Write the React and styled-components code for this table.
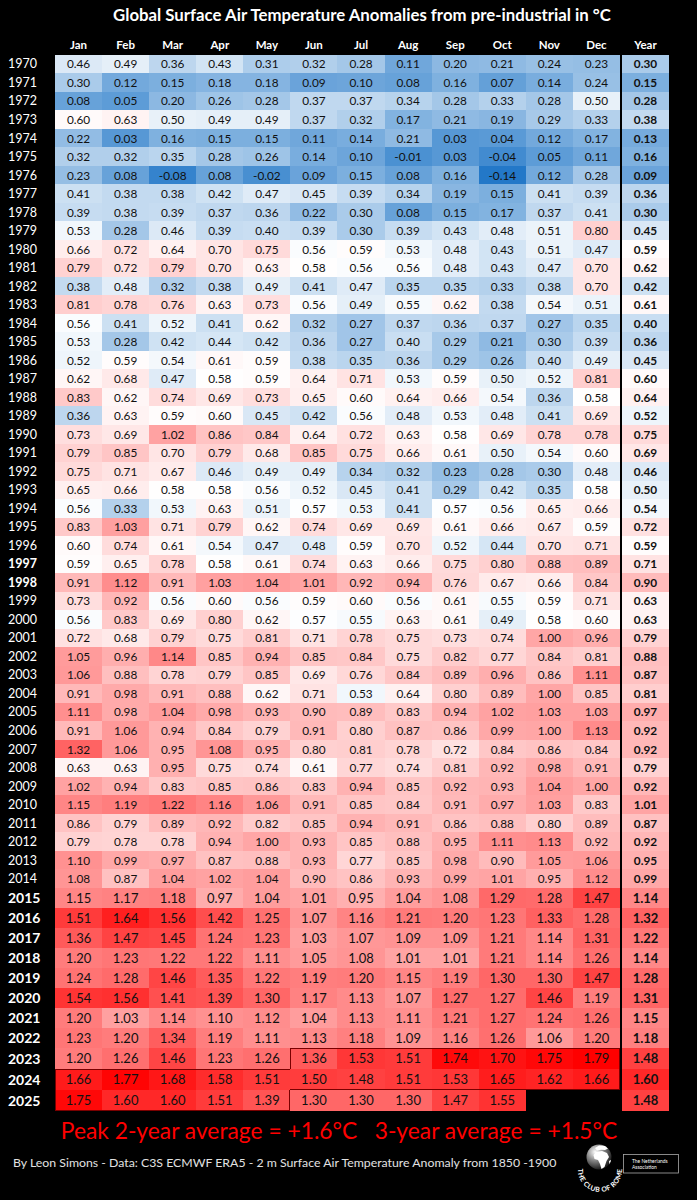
import React from 'react';
import styled, { createGlobalStyle } from 'styled-components';

const GlobalStyle = createGlobalStyle`
  html, body {
    margin: 0;
    padding: 0;
    background: #000;
  }
  body {
    font-family: Lato, 'Open Sans', 'Liberation Sans', sans-serif;
  }
`;

const MONTHS = ['Jan', 'Feb', 'Mar', 'Apr', 'May', 'Jun', 'Jul', 'Aug', 'Sep', 'Oct', 'Nov', 'Dec'];

// year, 12 months | yearly mean  ("-" = no data yet)
const RAW = `
1970 0.46 0.49 0.36 0.43 0.31 0.32 0.28 0.11 0.20 0.21 0.24 0.23 | 0.30
1971 0.30 0.12 0.15 0.18 0.18 0.09 0.10 0.08 0.16 0.07 0.14 0.24 | 0.15
1972 0.08 0.05 0.20 0.26 0.28 0.37 0.37 0.34 0.28 0.33 0.28 0.50 | 0.28
1973 0.60 0.63 0.50 0.49 0.49 0.37 0.32 0.17 0.21 0.19 0.29 0.33 | 0.38
1974 0.22 0.03 0.16 0.15 0.15 0.11 0.14 0.21 0.03 0.04 0.12 0.17 | 0.13
1975 0.32 0.32 0.35 0.28 0.26 0.14 0.10 -0.01 0.03 -0.04 0.05 0.11 | 0.16
1976 0.23 0.08 -0.08 0.08 -0.02 0.09 0.15 0.08 0.16 -0.14 0.12 0.28 | 0.09
1977 0.41 0.38 0.38 0.42 0.47 0.45 0.39 0.34 0.19 0.15 0.41 0.39 | 0.36
1978 0.39 0.38 0.39 0.37 0.36 0.22 0.30 0.08 0.15 0.17 0.37 0.41 | 0.30
1979 0.53 0.28 0.46 0.39 0.40 0.39 0.30 0.39 0.43 0.48 0.51 0.80 | 0.45
1980 0.66 0.72 0.64 0.70 0.75 0.56 0.59 0.53 0.48 0.43 0.51 0.47 | 0.59
1981 0.79 0.72 0.79 0.70 0.63 0.58 0.56 0.56 0.48 0.43 0.47 0.70 | 0.62
1982 0.38 0.48 0.32 0.38 0.49 0.41 0.47 0.35 0.35 0.33 0.38 0.70 | 0.42
1983 0.81 0.78 0.76 0.63 0.73 0.56 0.49 0.55 0.62 0.38 0.54 0.51 | 0.61
1984 0.56 0.41 0.52 0.41 0.62 0.32 0.27 0.37 0.36 0.37 0.27 0.35 | 0.40
1985 0.53 0.28 0.42 0.44 0.42 0.36 0.27 0.40 0.29 0.21 0.30 0.39 | 0.36
1986 0.52 0.59 0.54 0.61 0.59 0.38 0.35 0.36 0.29 0.26 0.40 0.49 | 0.45
1987 0.62 0.68 0.47 0.58 0.59 0.64 0.71 0.53 0.59 0.50 0.52 0.81 | 0.60
1988 0.83 0.62 0.74 0.69 0.73 0.65 0.60 0.64 0.66 0.54 0.36 0.58 | 0.64
1989 0.36 0.63 0.59 0.60 0.45 0.42 0.56 0.48 0.53 0.48 0.41 0.69 | 0.52
1990 0.73 0.69 1.02 0.86 0.84 0.64 0.72 0.63 0.58 0.69 0.78 0.78 | 0.75
1991 0.79 0.85 0.70 0.79 0.68 0.85 0.75 0.66 0.61 0.50 0.54 0.60 | 0.69
1992 0.75 0.71 0.67 0.46 0.49 0.49 0.34 0.32 0.23 0.28 0.30 0.48 | 0.46
1993 0.65 0.66 0.58 0.58 0.56 0.52 0.45 0.41 0.29 0.42 0.35 0.58 | 0.50
1994 0.56 0.33 0.53 0.63 0.51 0.57 0.53 0.41 0.57 0.56 0.65 0.66 | 0.54
1995 0.83 1.03 0.71 0.79 0.62 0.74 0.69 0.69 0.61 0.66 0.67 0.59 | 0.72
1996 0.60 0.74 0.61 0.54 0.47 0.48 0.59 0.70 0.52 0.44 0.70 0.71 | 0.59
1997 0.59 0.65 0.78 0.58 0.61 0.74 0.63 0.66 0.75 0.80 0.88 0.89 | 0.71
1998 0.91 1.12 0.91 1.03 1.04 1.01 0.92 0.94 0.76 0.67 0.66 0.84 | 0.90
1999 0.73 0.92 0.56 0.60 0.56 0.59 0.60 0.56 0.61 0.55 0.59 0.71 | 0.63
2000 0.56 0.83 0.69 0.80 0.62 0.57 0.55 0.63 0.61 0.49 0.58 0.60 | 0.63
2001 0.72 0.68 0.79 0.75 0.81 0.71 0.78 0.75 0.73 0.74 1.00 0.96 | 0.79
2002 1.05 0.96 1.14 0.85 0.94 0.85 0.84 0.75 0.82 0.77 0.84 0.81 | 0.88
2003 1.06 0.88 0.78 0.79 0.85 0.69 0.76 0.84 0.89 0.96 0.86 1.11 | 0.87
2004 0.91 0.98 0.91 0.88 0.62 0.71 0.53 0.64 0.80 0.89 1.00 0.85 | 0.81
2005 1.11 0.98 1.04 0.98 0.93 0.90 0.89 0.83 0.94 1.02 1.03 1.03 | 0.97
2006 0.91 1.06 0.94 0.84 0.79 0.91 0.80 0.87 0.86 0.99 1.00 1.13 | 0.92
2007 1.32 1.06 0.95 1.08 0.95 0.80 0.81 0.78 0.72 0.84 0.86 0.84 | 0.92
2008 0.63 0.63 0.95 0.75 0.74 0.61 0.77 0.74 0.81 0.92 0.98 0.91 | 0.79
2009 1.02 0.94 0.83 0.85 0.86 0.83 0.94 0.85 0.92 0.93 1.04 1.00 | 0.92
2010 1.15 1.19 1.22 1.16 1.06 0.91 0.85 0.84 0.91 0.97 1.03 0.83 | 1.01
2011 0.86 0.79 0.89 0.92 0.82 0.85 0.94 0.91 0.86 0.88 0.80 0.89 | 0.87
2012 0.79 0.78 0.78 0.94 1.00 0.93 0.85 0.88 0.95 1.11 1.13 0.92 | 0.92
2013 1.10 0.99 0.97 0.87 0.88 0.93 0.77 0.85 0.98 0.90 1.05 1.06 | 0.95
2014 1.08 0.87 1.04 1.02 1.04 0.90 0.86 0.93 0.99 1.01 0.95 1.12 | 0.99
2015 1.15 1.17 1.18 0.97 1.04 1.01 0.95 1.04 1.08 1.29 1.28 1.47 | 1.14
2016 1.51 1.64 1.56 1.42 1.25 1.07 1.16 1.21 1.20 1.23 1.33 1.28 | 1.32
2017 1.36 1.47 1.45 1.24 1.23 1.03 1.07 1.09 1.09 1.21 1.14 1.31 | 1.22
2018 1.20 1.23 1.22 1.22 1.11 1.05 1.08 1.01 1.01 1.21 1.14 1.26 | 1.14
2019 1.24 1.28 1.46 1.35 1.22 1.19 1.20 1.15 1.19 1.30 1.30 1.47 | 1.28
2020 1.54 1.56 1.41 1.39 1.30 1.17 1.13 1.07 1.27 1.27 1.46 1.19 | 1.31
2021 1.20 1.03 1.14 1.10 1.12 1.04 1.13 1.11 1.21 1.27 1.24 1.26 | 1.15
2022 1.23 1.20 1.34 1.19 1.11 1.13 1.18 1.09 1.16 1.26 1.06 1.20 | 1.18
2023 1.20 1.26 1.46 1.23 1.26 1.36 1.53 1.51 1.74 1.70 1.75 1.79 | 1.48
2024 1.66 1.77 1.68 1.58 1.51 1.50 1.48 1.51 1.53 1.65 1.62 1.66 | 1.60
2025 1.75 1.60 1.60 1.51 1.39 1.30 1.30 1.30 1.47 1.55 - - | 1.48
`;

const ROWS = RAW.trim().split('\n').map((line) => {
  const [left, mean] = line.split('|');
  const parts = left.trim().split(/\s+/);
  return {
    year: Number(parts[0]),
    months: parts.slice(1).map((v) => (v === '-' ? null : v)),
    mean: mean.trim(),
  };
});

// excel-like 3 colour scale: blue -> white -> red
const MIN = -0.14;
const MID = 0.575;
const MAX = 1.79;
const COLD = [35, 120, 200];
const HOT = [255, 0, 0];

function heat(value) {
  const n = parseFloat(value);
  const cold = n < MID;
  const t = cold ? Math.min(1, (MID - n) / (MID - MIN)) : Math.min(1, (n - MID) / (MAX - MID));
  const c = cold ? COLD : HOT;
  const mix = (i) => Math.round(255 + (c[i] - 255) * t);
  return `rgb(${mix(0)}, ${mix(1)}, ${mix(2)})`;
}

// peak 24 months: Jun 2023 - May 2025
const monthIndex = (year, m) => year * 12 + m;
const PEAK_FROM = monthIndex(2023, 5);
const PEAK_TO = monthIndex(2025, 4);
const inPeak = (year, m) => {
  const i = monthIndex(year, m);
  return i >= PEAK_FROM && i <= PEAK_TO;
};
function peakEdges(year, m) {
  if (!inPeak(year, m)) return '';
  let e = '';
  if (!inPeak(year - 1, m)) e += 't';
  if (!inPeak(year + 1, m)) e += 'b';
  if (m === 0 || !inPeak(year, m - 1)) e += 'l';
  if (m === 11 || !inPeak(year, m + 1)) e += 'r';
  return e;
}

function rowHeight(year) {
  if (year >= 2023) return 21;
  if (year >= 2015) return 20;
  return 18.52;
}

const GRID = `55px repeat(12, 1fr) 2px 47px`;

const Page = styled.div`
  width: 697px;
  height: 1200px;
  background: #000;
  color: #fff;
  overflow: hidden;
`;

const Title = styled.h1`
  margin: 0;
  width: 669px;
  height: 35px;
  box-sizing: border-box;
  padding-left: 55px;
  text-align: center;
  line-height: 30px;
  font-size: 16.8px;
  font-weight: 700;
  color: #fff;
  white-space: nowrap;
`;

const Table = styled.div`
  width: 669px;
`;

const HeaderRow = styled.div`
  display: grid;
  grid-template-columns: ${GRID};
  height: 19.7px;
  align-items: center;
`;

const HeaderLabel = styled.div`
  grid-column: ${(p) => p.$col};
  text-align: center;
  font-size: 11.5px;
  font-weight: 700;
  color: #fff;
`;

const Row = styled.div`
  display: grid;
  grid-template-columns: ${GRID};
  height: ${(p) => p.$h}px;
`;

const YearLabel = styled.div`
  display: flex;
  align-items: center;
  padding-left: 8px;
  color: #fff;
  font-size: ${(p) => (p.$big ? 14 : 12.5)}px;
  font-weight: ${(p) => (p.$bold ? 700 : 400)};
`;

const edgeShadow = (edges) => {
  const s = [];
  const c = '#7a0000';
  if (edges.includes('t')) s.push(`inset 0 1px 0 ${c}`);
  if (edges.includes('b')) s.push(`inset 0 -1px 0 ${c}`);
  if (edges.includes('l')) s.push(`inset 1px 0 0 ${c}`);
  if (edges.includes('r')) s.push(`inset -1px 0 0 ${c}`);
  return s.length ? s.join(', ') : 'none';
};

const Cell = styled.div`
  display: flex;
  align-items: center;
  justify-content: center;
  background: ${(p) => p.$bg};
  box-shadow: ${(p) => edgeShadow(p.$edges || '')};
  color: #111;
  font-size: ${(p) => (p.$big ? 13 : 11.8)}px;
  font-weight: ${(p) => (p.$bold ? 700 : 400)};
`;

const EmptyCell = styled.div`
  background: #000;
`;

const Gap = styled.div`
  background: #000;
`;

const Headline = styled.div`
  width: 678px;
  height: 38px;
  line-height: 38px;
  text-align: center;
  color: #ff0000;
  font-size: 22.8px;
  white-space: pre;
`;

const CreditRow = styled.div`
  display: flex;
  align-items: flex-start;
  height: 51px;
`;

const Credits = styled.div`
  padding: 7px 0 0 13px;
  line-height: 14px;
  font-size: 12.3px;
  color: #e2e2e2;
  white-space: nowrap;
`;

const LogoWrap = styled.div`
  margin: -9px 12px 0 auto;
  width: 115px;
  height: 58px;
  flex-shrink: 0;
`;

function ClubOfRomeLogo() {
  return (
    <LogoWrap>
      <svg width="115" height="58" viewBox="0 0 115 58">
        <defs>
          <radialGradient id="globeShade" cx="35%" cy="30%" r="75%">
            <stop offset="0" stopColor="#ffffff" />
            <stop offset="0.45" stopColor="#8a8a8a" />
            <stop offset="1" stopColor="#111" />
          </radialGradient>
          <clipPath id="globeClip">
            <circle cx="29" cy="17" r="12.5" />
          </clipPath>
          <path id="clubArc" d="M 9.3 22.5 A 22 22 0 1 0 50.7 22.5" />
        </defs>
        <circle cx="29" cy="17" r="12.5" fill="url(#globeShade)" />
        <g clipPath="url(#globeClip)" fill="#fff">
          <path d="M25 8 L29 5.5 L35 5.8 L38 8.5 L35 10 L31 9.8 L27 10.5 Z" />
          <path d="M26 12 L32 11 L37 13 L39 17 L36.5 21 L34.5 27 L31.5 29 L30 24 L28 20 L24.5 19 L23.5 15 Z" />
          <path d="M39 21 L41 20 L41 25 L39.5 25 Z" />
        </g>
        <text
          fill="#fff"
          fontSize="6.8"
          fontWeight="700"
          letterSpacing="0.4"
          textAnchor="middle"
          fontFamily="Lato, sans-serif"
        >
          <textPath href="#clubArc" startOffset="50%">THE CLUB OF ROME</textPath>
        </text>
        <rect x="53.5" y="14.5" width="55" height="18.5" fill="none" stroke="#aaa" strokeWidth="0.8" />
        <text x="62" y="22.8" fill="#fff" fontSize="4.9" fontFamily="Lato, sans-serif">The Netherlands</text>
        <text x="62" y="29" fill="#fff" fontSize="4.9" fontFamily="Lato, sans-serif">Association</text>
      </svg>
    </LogoWrap>
  );
}

function App() {
  return (
    <Page>
      <GlobalStyle />
      <Title>Global Surface Air Temperature Anomalies from pre-industrial in °C</Title>
      <Table>
        <HeaderRow>
          {MONTHS.map((m, i) => (
            <HeaderLabel key={m} $col={i + 2}>{m}</HeaderLabel>
          ))}
          <HeaderLabel $col={15}>Year</HeaderLabel>
        </HeaderRow>
        {ROWS.map((row) => {
          const big = row.year >= 2015;
          const boldYear = big || row.year === 1997 || row.year === 1998;
          return (
            <Row key={row.year} $h={rowHeight(row.year)}>
              <YearLabel $big={big} $bold={boldYear}>{row.year}</YearLabel>
              {row.months.map((v, m) =>
                v === null ? (
                  <EmptyCell key={m} />
                ) : (
                  <Cell key={m} $bg={heat(v)} $big={big} $edges={peakEdges(row.year, m)}>
                    {v}
                  </Cell>
                )
              )}
              <Gap />
              <Cell $bg={heat(row.mean)} $big={big} $bold>
                {row.mean}
              </Cell>
            </Row>
          );
        })}
      </Table>
      <Headline>{'Peak 2-year average = +1.6°C   3-year average = +1.5°C'}</Headline>
      <CreditRow>
        <Credits>By Leon Simons - Data: C3S ECMWF ERA5 - 2 m Surface Air Temperature Anomaly from 1850 -1900</Credits>
        <ClubOfRomeLogo />
      </CreditRow>
    </Page>
  );
}

export default App;
